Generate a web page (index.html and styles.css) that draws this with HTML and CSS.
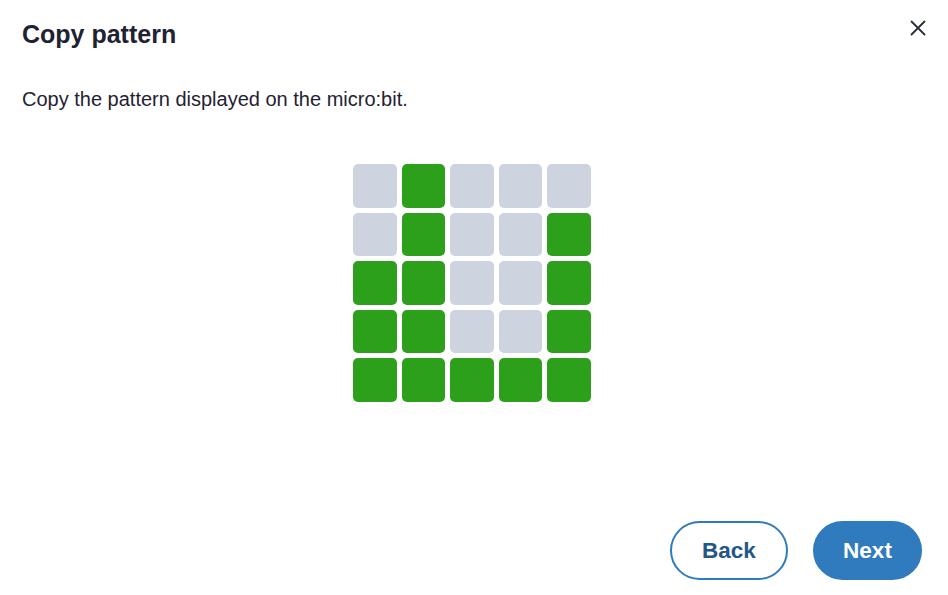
FILE: index.html
```html
<!DOCTYPE html>
<html>
<head>
<meta charset="utf-8">
<link rel="stylesheet" href="styles.css">
</head>
<body>
<div class="dialog">
  <div class="header">
    <h1 class="title">Copy pattern</h1>
    <button class="close" aria-label="Close">
      <svg width="16" height="16" viewBox="0 0 16 16"><path d="M1.5 1.5 L14.5 14.5 M14.5 1.5 L1.5 14.5" stroke="#2a2d3a" stroke-width="1.8" stroke-linecap="round" fill="none"/></svg>
    </button>
  </div>
  <p class="desc">Copy the pattern displayed on the micro:bit.</p>
  <div class="grid-wrap">
    <div class="grid">
      <div class="cell"></div><div class="cell on"></div><div class="cell"></div><div class="cell"></div><div class="cell"></div>
      <div class="cell"></div><div class="cell on"></div><div class="cell"></div><div class="cell"></div><div class="cell on"></div>
      <div class="cell on"></div><div class="cell on"></div><div class="cell"></div><div class="cell"></div><div class="cell on"></div>
      <div class="cell on"></div><div class="cell on"></div><div class="cell"></div><div class="cell"></div><div class="cell on"></div>
      <div class="cell on"></div><div class="cell on"></div><div class="cell on"></div><div class="cell on"></div><div class="cell on"></div>
    </div>
  </div>
  <div class="footer">
    <button class="btn btn-back">Back</button>
    <button class="btn btn-next">Next</button>
  </div>
</div>
</body>
</html>
```

FILE: styles.css
```css
html, body {
  margin: 0;
  padding: 0;
  background: #ffffff;
}
body {
  font-family: "Liberation Sans", Arial, sans-serif;
  color: #1f2233;
}
.dialog {
  box-sizing: border-box;
  width: 948px;
  height: 595px;
  padding: 16px 26px 15px 22px;
  display: flex;
  flex-direction: column;
}
.header {
  display: flex;
  justify-content: space-between;
  align-items: flex-start;
}
.title {
  margin: 3px 0 0 0;
  font-size: 25px;
  font-weight: bold;
  line-height: 30px;
  color: #1f2233;
}
.close {
  border: none;
  background: none;
  padding: 0;
  margin: 4px -4px 0 0;
  width: 16px;
  height: 16px;
  cursor: pointer;
}
.close svg { display: block; }
.desc {
  margin: 38px 0 0 0;
  font-size: 20px;
  line-height: 24px;
  color: #1f2233;
}
.grid-wrap {
  display: flex;
  justify-content: center;
  margin-top: 53px;
}
.grid {
  width: 238px;
  height: 238px;
  display: grid;
  grid-template-columns: repeat(5, 1fr);
  grid-template-rows: repeat(5, 1fr);
  gap: 5px;
}
.cell {
  background: #cdd4df;
  border-radius: 5px;
}
.cell.on {
  background: #2c9f1b;
}
.footer {
  margin-top: auto;
  display: flex;
  justify-content: flex-end;
  gap: 25px;
}
.btn {
  height: 59px;
  border-radius: 30px;
  font-family: "Liberation Sans", Arial, sans-serif;
  font-size: 22.5px;
  font-weight: bold;
  cursor: pointer;
  box-sizing: border-box;
  padding-top: 2px;
}
.btn-back {
  width: 118px;
  background: #ffffff;
  border: 2px solid #2f7bbd;
  color: #235785;
}
.btn-next {
  width: 109px;
  background: #2f7bbd;
  border: 2px solid #2f7bbd;
  color: #ffffff;
}
```
